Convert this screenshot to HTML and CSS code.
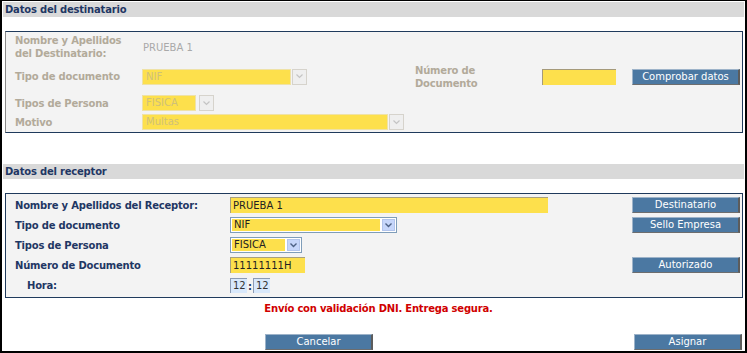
FILE: index.html
```html
<!DOCTYPE html>
<html lang="es">
<head>
    <meta charset="UTF-8">
    <title>Datos del destinatario</title>
    <link rel="stylesheet" href="styles.css">
</head>
<body>
<div class="frame">
    <div class="bar">Datos del destinatario</div>
    <div class="panel panel-off">
        <div class="lbl">Nombre y Apellidos<br>del Destinatario:</div>
        <div class="val span4">PRUEBA 1</div>

        <div class="lbl">Tipo de documento</div>
        <div class="dsel w-tipo">
            <span class="field">NIF</span>
            <span class="arr"><svg width="7" height="5" viewBox="0 0 7 5"><path d="M0.5 0.5 L3.5 3.5 L6.5 0.5" fill="none" stroke="#c4c4c4" stroke-width="1.2"/></svg></span>
        </div>
        <div class="lbl">Número de<br>Documento</div>
        <div class="inp-off"></div>
        <div class="btn">Comprobar datos</div>

        <div class="lbl">Tipos de Persona</div>
        <div class="dsel w-pers span4">
            <span class="field">FISICA</span>
            <span class="arr"><svg width="7" height="5" viewBox="0 0 7 5"><path d="M0.5 0.5 L3.5 3.5 L6.5 0.5" fill="none" stroke="#c4c4c4" stroke-width="1.2"/></svg></span>
        </div>

        <div class="lbl">Motivo</div>
        <div class="dsel w-mot span4">
            <span class="field">Multas</span>
            <span class="arr"><svg width="7" height="5" viewBox="0 0 7 5"><path d="M0.5 0.5 L3.5 3.5 L6.5 0.5" fill="none" stroke="#c4c4c4" stroke-width="1.2"/></svg></span>
        </div>
    </div>

    <div class="bar bar-2">Datos del receptor</div>
    <div class="panel panel-on">
        <div class="lbl">Nombre y Apellidos del Receptor:</div>
        <div><div class="inp w-nom">PRUEBA 1</div></div>
        <div class="btn">Destinatario</div>

        <div class="lbl">Tipo de documento</div>
        <div>
            <div class="sel w-tipo2">
                <span class="field">NIF</span>
                <span class="arr"><svg width="7" height="5" viewBox="0 0 7 5"><path d="M0.5 0.5 L3.5 3.5 L6.5 0.5" fill="none" stroke="#4d6185" stroke-width="1.4"/></svg></span>
            </div>
        </div>
        <div class="btn">Sello Empresa</div>

        <div class="lbl">Tipos de Persona</div>
        <div class="span2">
            <div class="sel w-pers2">
                <span class="field">FISICA</span>
                <span class="arr"><svg width="7" height="5" viewBox="0 0 7 5"><path d="M0.5 0.5 L3.5 3.5 L6.5 0.5" fill="none" stroke="#4d6185" stroke-width="1.4"/></svg></span>
            </div>
        </div>

        <div class="lbl">Número de Documento</div>
        <div><div class="inp w-num">11111111H</div></div>
        <div class="btn">Autorizado</div>

        <div class="lbl lbl-hora">Hora:</div>
        <div class="hora span2">
            <span class="hh">12</span>
            <span class="sep">:</span>
            <span class="hh hh-2">12</span>
        </div>
    </div>

    <div class="aviso">Envío con validación DNI. Entrega segura.</div>

    <div class="acciones">
        <div class="btn">Cancelar</div>
        <div class="btn btn-right">Asignar</div>
    </div>
</div>
</body>
</html>
```

FILE: styles.css
```css
* {
    margin: 0;
    padding: 0;
    box-sizing: border-box;
}

body {
    font-family: "DejaVu Sans", Verdana, sans-serif;
    font-size: 10px;
    background: #fff;
}

.frame {
    width: 747px;
    height: 353px;
    border: 2px solid #000;
    border-top-width: 1px;
    padding: 1px 1px 0 1px;
    overflow: hidden;
}

.bar {
    height: 15px;
    line-height: 15px;
    background: #d9d9d9;
    color: #1f3764;
    font-weight: bold;
    letter-spacing: -0.2px;
    padding-left: 2px;
}

.bar-2 {
    margin-top: 31px;
}

.panel {
    margin: 14px 1px 0 2px;
    border: 1px solid #1f3a5c;
    background: #f3f3f3;
    display: grid;
    align-items: center;
    padding: 1px 0 2px 9px;
}

.panel-off {
    grid-template-columns: 127px 273px 127px 90px 108px;
    grid-template-rows: 28px 31px 22px 16px;
    border-left-color: #8a8a8a;
}

.panel-on {
    grid-template-columns: 215px 402px 108px;
    grid-template-rows: repeat(5, 20px);
}

.span4 {
    grid-column: span 4;
}

.span2 {
    grid-column: span 2;
}

.lbl {
    font-weight: bold;
    letter-spacing: -0.2px;
    line-height: 13px;
}

.panel-off .lbl {
    color: #b2aa9a;
}

.panel-on .lbl {
    color: #1f3764;
}

.lbl-hora {
    padding-left: 12px;
}

.val {
    color: #a9a9a9;
    padding-left: 1px;
}

/* selects deshabilitados */
.dsel {
    display: flex;
    height: 16px;
}

.dsel .field {
    flex: 1;
    background: #fde04c;
    border: 1px solid #efe2a6;
    color: #cfc07a;
    padding-left: 3px;
    line-height: 14px;
}

.dsel .arr {
    width: 15px;
    margin-left: 1px;
    background: #efefef;
    border: 1px solid #d6d3cc;
    display: flex;
    align-items: center;
    justify-content: center;
}

.w-tipo { width: 165px; }
.w-pers { width: 72px; }
.w-pers .arr { margin-left: 3px; }
.w-mot { width: 262px; }

.inp-off {
    width: 74px;
    height: 16px;
    background: #fde04c;
    border-top: 1px solid #a59a7a;
    border-left: 1px solid #a59a7a;
}

/* selects activos */
.sel {
    display: flex;
    height: 16px;
    border: 1px solid #7f9db9;
    background: #fff;
    padding: 1px;
}

.sel .field {
    flex: 1;
    background: #fde04c;
    color: #222;
    padding-left: 2px;
    line-height: 12px;
}

.sel .arr {
    width: 13px;
    margin-left: 2px;
    background: #c6d6fa;
    border: 1px solid #b2c4ec;
    display: flex;
    align-items: center;
    justify-content: center;
}

.w-tipo2 { width: 167px; }
.w-pers2 { width: 72px; }

.inp {
    height: 16px;
    background: #fde04c;
    border-top: 1px solid #a8a07e;
    border-left: 1px solid #a8a07e;
    color: #222;
    padding-left: 2px;
    line-height: 15px;
}

.w-nom { width: 318px; }
.w-num { width: 75px; }

.hora {
    display: flex;
    align-items: center;
}

.hh {
    width: 17px;
    height: 15px;
    background: #d8e8fb;
    border-top: 1px solid #8c9bb4;
    border-left: 1px solid #8c9bb4;
    color: #333;
    padding-left: 2px;
    line-height: 14px;
}

.hh-2 {
    width: 17px;
}

.sep {
    width: 6px;
    text-align: center;
    font-weight: bold;
    color: #1f3764;
    padding-top: 2px;
}

.btn {
    width: 108px;
    height: 16px;
    background: #4b78a2;
    color: #fff;
    text-align: center;
    line-height: 14px;
    border-top: 1px solid #9db3c9;
    border-left: 1px solid #9db3c9;
    border-right: 2px solid #5c5c5c;
    border-bottom: 1px solid #6d6d6d;
}

.aviso {
    margin-top: 4px;
    line-height: 13px;
    color: #d00000;
    font-weight: bold;
    letter-spacing: -0.2px;
    text-align: center;
    padding-left: 10px;
}

.acciones {
    display: flex;
    margin-top: 19px;
    padding-left: 262px;
}

.btn-right {
    margin-left: auto;
    margin-right: 2px;
}
```
